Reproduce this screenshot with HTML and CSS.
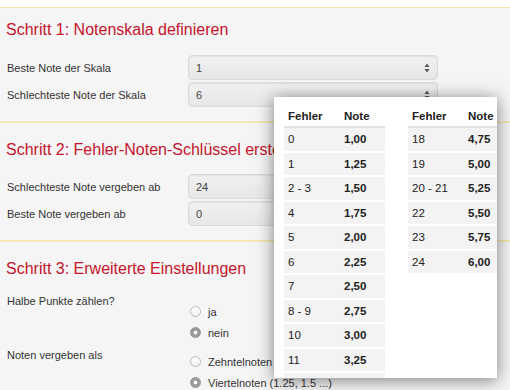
FILE: index.html
```html
<!DOCTYPE html>
<html lang="de">
<head>
  <meta charset="UTF-8">
  <title>Notenschlüssel</title>
  <link rel="stylesheet" href="styles.css">
</head>
<body>
  <div class="topbar"></div>

  <section class="step step-first">
    <h2>Schritt 1: Notenskala definieren</h2>
    <div class="field">
      <label>Beste Note der Skala</label>
      <div class="select"><span>1</span>
        <svg class="arrows" width="6" height="10" viewBox="0 0 6 10"><path d="M3 0.5L5.5 4H0.5Z M3 9.5L5.5 6H0.5Z" fill="#555"/></svg>
      </div>
    </div>
    <div class="field">
      <label>Schlechteste Note der Skala</label>
      <div class="select"><span>6</span>
        <svg class="arrows" width="6" height="10" viewBox="0 0 6 10"><path d="M3 0.5L5.5 4H0.5Z M3 9.5L5.5 6H0.5Z" fill="#555"/></svg>
      </div>
    </div>
  </section>

  <section class="step">
    <h2>Schritt 2: Fehler-Noten-Schlüssel erstellen</h2>
    <div class="field">
      <label>Schlechteste Note vergeben ab</label>
      <div class="input">24</div>
    </div>
    <div class="field">
      <label>Beste Note vergeben ab</label>
      <div class="input">0</div>
      <span class="hint">(Anzahl der Fehler)</span>
    </div>
  </section>

  <section class="step step-last">
    <h2>Schritt 3: Erweiterte Einstellungen</h2>
    <div class="choice">
      <label>Halbe Punkte zählen?</label>
      <div class="options">
        <div class="option"><span class="radio"></span>ja</div>
        <div class="option"><span class="radio checked"></span>nein</div>
      </div>
    </div>
    <div class="choice choice-tight">
      <label>Noten vergeben als</label>
      <div class="options">
        <div class="option"><span class="radio"></span>Zehntelnoten (1.1, 1.2 ...)</div>
        <div class="option"><span class="radio checked"></span>Viertelnoten (1.25, 1.5 ...)</div>
      </div>
    </div>
  </section>

  <div class="key-popup">
    <div class="key-table">
      <div class="key-head"><span>Fehler</span><span>Note</span></div>
      <div class="key-row"><span>0</span><b>1,00</b></div>
      <div class="key-row"><span>1</span><b>1,25</b></div>
      <div class="key-row"><span>2 - 3</span><b>1,50</b></div>
      <div class="key-row"><span>4</span><b>1,75</b></div>
      <div class="key-row"><span>5</span><b>2,00</b></div>
      <div class="key-row"><span>6</span><b>2,25</b></div>
      <div class="key-row"><span>7</span><b>2,50</b></div>
      <div class="key-row"><span>8 - 9</span><b>2,75</b></div>
      <div class="key-row"><span>10</span><b>3,00</b></div>
      <div class="key-row"><span>11</span><b>3,25</b></div>
      <div class="key-row"><span>12 - 13</span><b>3,50</b></div>
    </div>
    <div class="key-table">
      <div class="key-head"><span>Fehler</span><span>Note</span></div>
      <div class="key-row"><span>18</span><b>4,75</b></div>
      <div class="key-row"><span>19</span><b>5,00</b></div>
      <div class="key-row"><span>20 - 21</span><b>5,25</b></div>
      <div class="key-row"><span>22</span><b>5,50</b></div>
      <div class="key-row"><span>23</span><b>5,75</b></div>
      <div class="key-row"><span>24</span><b>6,00</b></div>
    </div>
  </div>
</body>
</html>
```

FILE: styles.css
```css
body {
  margin: 0;
  background: #f5f5f5;
  font-family: "Liberation Sans", Arial, sans-serif;
  color: #333;
  overflow: hidden;
}
.topbar {
  height: 7px;
  background: #fff;
  border-bottom: 1px solid #f3e5ac;
}
.step {
  padding: 17px 0 12px 7px;
  border-bottom: 2px solid #f5e8b4;
}
.step-first {
  padding-top: 12px;
}
.step-last {
  border-bottom: none;
}
h2 {
  margin: 0 0 14px -1px;
  font-size: 16px;
  line-height: 20px;
  font-weight: normal;
  color: #c4142c;
}
.step-first h2 {
  margin-bottom: 15px;
}
.field {
  display: flex;
  align-items: center;
  height: 25px;
  margin-bottom: 2px;
  font-size: 11px;
}
.field label {
  width: 181px;
  flex: none;
}
.select,
.input {
  box-sizing: border-box;
  width: 250px;
  height: 25px;
  display: flex;
  align-items: center;
  justify-content: space-between;
  padding: 0 7px;
  background: linear-gradient(#f1f1f1, #e7e7e7);
  border: 1px solid #dadada;
  border-radius: 4px;
  box-shadow: inset 0 1px 2px rgba(0, 0, 0, 0.07);
  color: #444;
}
.hint {
  margin-left: auto;
  font-size: 9.5px;
  color: #888;
}
.choice {
  display: flex;
  font-size: 11px;
  margin-bottom: 4px;
}
.choice label {
  width: 181px;
  flex: none;
  line-height: 14px;
  margin-top: 1px;
}
.options {
  padding-top: 8px;
}
.choice-tight .options {
  padding-top: 4px;
}
.option {
  display: flex;
  align-items: center;
  height: 21px;
}
.radio {
  box-sizing: border-box;
  width: 11px;
  height: 11px;
  margin: 0 7px 0 2px;
  border-radius: 50%;
  background: linear-gradient(#fff, #f0f0f0);
  border: 1px solid #bcbcbc;
}
.radio.checked {
  background: radial-gradient(circle, #fff 0 1.6px, #9c9c9c 2.2px);
  border-color: #929292;
}
.key-popup {
  position: absolute;
  left: 274px;
  top: 97px;
  width: 223px;
  height: 281px;
  overflow: hidden;
  background: #fff;
  box-shadow: 0 2px 16px rgba(0, 0, 0, 0.5);
  display: flex;
  gap: 23px;
  padding: 8px 0 0 10px;
  box-sizing: border-box;
  font-size: 11.5px;
  color: #222;
}
.key-table {
  width: 101px;
  flex: none;
}
.key-head,
.key-row {
  display: grid;
  grid-template-columns: 56px 45px;
  align-items: center;
}
.key-head span,
.key-row span,
.key-row b {
  padding-left: 4px;
}
.key-head {
  height: 21px;
  font-weight: bold;
  border-bottom: 2px solid #e4e4e4;
}
.key-row {
  height: 22.5px;
  background: #f3f3f3;
  border-bottom: 2px solid #fff;
}
```
